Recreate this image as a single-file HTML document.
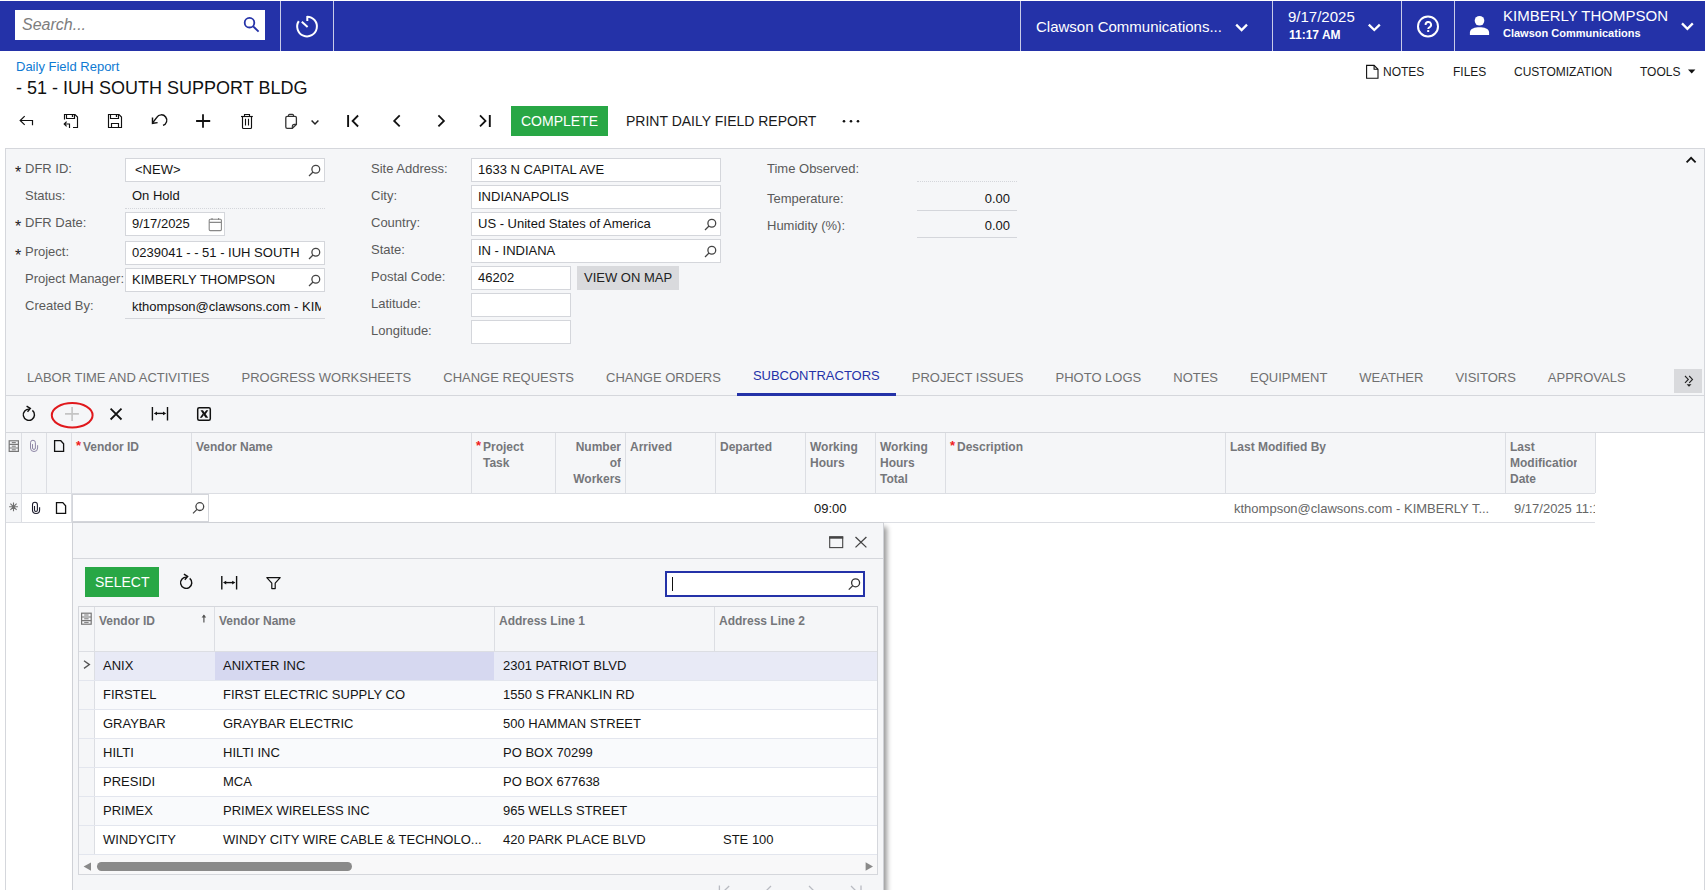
<!DOCTYPE html>
<html><head><meta charset="utf-8">
<style>
*{box-sizing:border-box;margin:0;padding:0}
html,body{width:1705px;height:890px;overflow:hidden;background:#fff}
body{position:relative;font-family:"Liberation Sans",sans-serif;color:#1a1a1a;font-size:13px}
.a{position:absolute}
.t{position:absolute;white-space:nowrap;line-height:1}
svg{position:absolute;overflow:visible}
/* header */
#hdr{left:0;top:1px;width:1705px;height:50px;background:#2432a8}
.sep{position:absolute;top:1px;width:1px;height:50px;background:#c8cbe8}
.wt{color:#fff}
/* form */
.lbl{color:#5a5a5a;font-size:13px}
.inp{position:absolute;height:24px;background:#fff;border:1px solid #d4d6db}
.val{color:#141414;font-size:13px}
.gh{color:#75777b;font-weight:bold;font-size:12px;line-height:16px}
.tab{color:#707070;font-size:13px;line-height:1;height:34px}
.cell{color:#141414;font-size:13px}
</style></head>
<body>
<!-- HEADER -->
<div class="a" id="hdr"></div>
<div class="a" style="left:15px;top:10px;width:250px;height:30px;background:#fff"></div>
<div class="t" style="left:22px;top:17px;font-size:16px;font-style:italic;color:#7d7d7d">Search...</div>
<div class="sep" style="left:280px"></div>
<div class="sep" style="left:333px"></div>
<div class="sep" style="left:1020px"></div>
<div class="sep" style="left:1272px"></div>
<div class="sep" style="left:1401px"></div>
<div class="sep" style="left:1454px"></div>
<div class="t wt" style="left:1036px;top:19px;font-size:15px">Clawson Communications...</div>
<div class="t wt" style="left:1288px;top:9px;font-size:15px">9/17/2025</div>
<div class="t wt" style="left:1289px;top:29px;font-size:12px;font-weight:bold">11:17 AM</div>
<div class="t wt" style="left:1503px;top:8px;font-size:15px">KIMBERLY THOMPSON</div>
<div class="t wt" style="left:1503px;top:28px;font-size:11px;font-weight:bold">Clawson Communications</div>

<!-- TITLE -->
<div class="t" style="left:16px;top:60px;font-size:13px;color:#0e7ad3">Daily Field Report</div>
<div class="t" style="left:16px;top:79px;font-size:18px;color:#111">- 51 - IUH SOUTH SUPPORT BLDG</div>
<div class="t" style="left:1383px;top:66px;font-size:12px;color:#1a1a1a">NOTES</div>
<div class="t" style="left:1453px;top:66px;font-size:12px;color:#1a1a1a">FILES</div>
<div class="t" style="left:1514px;top:66px;font-size:12px;color:#1a1a1a">CUSTOMIZATION</div>
<div class="t" style="left:1640px;top:66px;font-size:12px;color:#1a1a1a">TOOLS</div>

<!-- TOOLBAR -->
<div class="a" style="left:511px;top:106px;width:97px;height:30px;background:#28a745"></div>
<div class="t" style="left:521px;top:114px;font-size:14px;color:#fff">COMPLETE</div>
<div class="t" style="left:626px;top:114px;font-size:14px;color:#1a1a1a">PRINT DAILY FIELD REPORT</div>

<!-- FORM PANEL -->
<div class="a" style="left:5px;top:148px;width:1700px;height:250px;background:#f5f6f8;border:1px solid #d5d7dc;border-bottom:none"></div>


<!-- FORM COL 1 -->
<div class="t lbl" style="left:15px;top:165px;font-size:16px;color:#222">*</div>
<div class="t lbl" style="left:25px;top:162px">DFR ID:</div>
<div class="inp" style="left:125px;top:158px;width:200px"></div>
<div class="t val" style="left:135px;top:163px">&lt;NEW&gt;</div>
<div class="t lbl" style="left:25px;top:189px">Status:</div>
<div class="t val" style="left:132px;top:189px">On Hold</div>
<div class="a" style="left:125px;top:208px;width:200px;height:1px;border-top:1px dotted #d4d6db"></div>
<div class="t lbl" style="left:15px;top:219px;font-size:16px;color:#222">*</div>
<div class="t lbl" style="left:25px;top:216px">DFR Date:</div>
<div class="inp" style="left:125px;top:212px;width:100px"></div>
<div class="t val" style="left:132px;top:217px">9/17/2025</div>
<div class="t lbl" style="left:15px;top:248px;font-size:16px;color:#222">*</div>
<div class="t lbl" style="left:25px;top:245px">Project:</div>
<div class="inp" style="left:125px;top:241px;width:200px"></div>
<div class="t val" style="left:132px;top:246px">0239041 - - 51 - IUH SOUTH</div>
<div class="t lbl" style="left:25px;top:272px">Project Manager:</div>
<div class="inp" style="left:125px;top:268px;width:200px"></div>
<div class="t val" style="left:132px;top:273px">KIMBERLY THOMPSON</div>
<div class="t lbl" style="left:25px;top:299px">Created By:</div>
<div class="a" style="left:125px;top:296px;width:196px;height:22px;overflow:hidden"><div class="t val" style="left:7px;top:4px">kthompson@clawsons.com - KIMBERLY THOMPSON</div></div>
<div class="a" style="left:125px;top:318px;width:200px;height:1px;background:#d4d6db"></div>

<!-- FORM COL 2 -->
<div class="t lbl" style="left:371px;top:162px">Site Address:</div>
<div class="inp" style="left:471px;top:158px;width:250px"></div>
<div class="t val" style="left:478px;top:163px">1633 N CAPITAL AVE</div>
<div class="t lbl" style="left:371px;top:189px">City:</div>
<div class="inp" style="left:471px;top:185px;width:250px"></div>
<div class="t val" style="left:478px;top:190px">INDIANAPOLIS</div>
<div class="t lbl" style="left:371px;top:216px">Country:</div>
<div class="inp" style="left:471px;top:212px;width:250px"></div>
<div class="t val" style="left:478px;top:217px">US - United States of America</div>
<div class="t lbl" style="left:371px;top:243px">State:</div>
<div class="inp" style="left:471px;top:239px;width:250px"></div>
<div class="t val" style="left:478px;top:244px">IN - INDIANA</div>
<div class="t lbl" style="left:371px;top:270px">Postal Code:</div>
<div class="inp" style="left:471px;top:266px;width:100px"></div>
<div class="t val" style="left:478px;top:271px">46202</div>
<div class="a" style="left:577px;top:266px;width:102px;height:24px;background:#d9dadd"></div>
<div class="t" style="left:584px;top:271px;font-size:13px;color:#222">VIEW ON MAP</div>
<div class="t lbl" style="left:371px;top:297px">Latitude:</div>
<div class="inp" style="left:471px;top:293px;width:100px"></div>
<div class="t lbl" style="left:371px;top:324px">Longitude:</div>
<div class="inp" style="left:471px;top:320px;width:100px"></div>

<!-- FORM COL 3 -->
<div class="t lbl" style="left:767px;top:162px">Time Observed:</div>
<div class="a" style="left:917px;top:181px;width:100px;height:1px;border-top:1px dotted #d4d6db"></div>
<div class="t lbl" style="left:767px;top:192px">Temperature:</div>
<div class="t val" style="left:917px;top:192px;width:93px;text-align:right">0.00</div>
<div class="a" style="left:917px;top:210px;width:100px;height:1px;background:#d4d6db"></div>
<div class="t lbl" style="left:767px;top:219px">Humidity (%):</div>
<div class="t val" style="left:917px;top:219px;width:93px;text-align:right">0.00</div>
<div class="a" style="left:917px;top:237px;width:100px;height:1px;background:#d4d6db"></div>

<!-- TABS -->
<div class="a" style="left:5px;top:395px;width:1700px;height:1px;background:#d5d7dc"></div>
<div class="a" style="left:11px;top:361px;height:34px;display:flex" id="tabs">
<div class="tab" style="padding:0 16px;padding-top:10px">LABOR TIME AND ACTIVITIES</div>
<div class="tab" style="padding:0 16px;padding-top:10px">PROGRESS WORKSHEETS</div>
<div class="tab" style="padding:0 16px;padding-top:10px">CHANGE REQUESTS</div>
<div class="tab" style="padding:0 16px;padding-top:10px">CHANGE ORDERS</div>
<div class="tab" style="padding:0 16px;padding-top:8px;height:35px;color:#2432a8;border-bottom:3px solid #2432a8">SUBCONTRACTORS</div>
<div class="tab" style="padding:0 16px;padding-top:10px">PROJECT ISSUES</div>
<div class="tab" style="padding:0 16px;padding-top:10px">PHOTO LOGS</div>
<div class="tab" style="padding:0 16px;padding-top:10px">NOTES</div>
<div class="tab" style="padding:0 16px;padding-top:10px">EQUIPMENT</div>
<div class="tab" style="padding:0 16px;padding-top:10px">WEATHER</div>
<div class="tab" style="padding:0 16px;padding-top:10px">VISITORS</div>
<div class="tab" style="padding:0 16px;padding-top:10px">APPROVALS</div>
</div>
<div class="a" style="left:1674px;top:369px;width:28px;height:24px;background:#d9dadd"></div>


<!-- GRID TOOLBAR -->
<div class="a" style="left:5px;top:396px;width:1700px;height:494px;background:#fff;border-left:1px solid #d5d7dc;border-right:1px solid #d5d7dc"></div>
<div class="a" style="left:6px;top:396px;width:1698px;height:36px;background:#f5f6f8"></div>
<div class="a" style="left:5px;top:432px;width:1700px;height:1px;background:#d5d7dc"></div>
<!-- GRID HEADER -->
<div class="a" style="left:6px;top:433px;width:1589px;height:60px;background:#f5f6f8"></div>
<div class="a" style="left:6px;top:493px;width:1589px;height:1px;background:#dcdee3"></div>
<div class="a" style="left:6px;top:522px;width:1589px;height:1px;background:#dcdee3"></div>

<div class="a" style="left:1595px;top:433px;width:1px;height:60px;background:#dcdee3"></div>
<div class="a" style="left:21px;top:433px;width:1px;height:60px;background:#dcdee3"></div>
<div class="a" style="left:46px;top:433px;width:1px;height:60px;background:#dcdee3"></div>
<div class="a" style="left:71px;top:433px;width:1px;height:60px;background:#dcdee3"></div>
<div class="a" style="left:191px;top:433px;width:1px;height:60px;background:#dcdee3"></div>
<div class="a" style="left:471px;top:433px;width:1px;height:60px;background:#dcdee3"></div>
<div class="a" style="left:555px;top:433px;width:1px;height:60px;background:#dcdee3"></div>
<div class="a" style="left:625px;top:433px;width:1px;height:60px;background:#dcdee3"></div>
<div class="a" style="left:715px;top:433px;width:1px;height:60px;background:#dcdee3"></div>
<div class="a" style="left:805px;top:433px;width:1px;height:60px;background:#dcdee3"></div>
<div class="a" style="left:875px;top:433px;width:1px;height:60px;background:#dcdee3"></div>
<div class="a" style="left:945px;top:433px;width:1px;height:60px;background:#dcdee3"></div>
<div class="a" style="left:1225px;top:433px;width:1px;height:60px;background:#dcdee3"></div>
<div class="a" style="left:1505px;top:433px;width:1px;height:60px;background:#dcdee3"></div>
<div class="a" style="left:21px;top:494px;width:1px;height:28px;background:#dcdee3"></div>
<div class="a" style="left:71px;top:494px;width:1px;height:28px;background:#dcdee3"></div>

<div class="t" style="left:76px;top:439px;font-size:13px;color:#f01c1c;font-weight:bold">*</div>
<div class="t gh" style="left:83px;top:439px">Vendor ID</div>
<div class="t gh" style="left:196px;top:439px">Vendor Name</div>
<div class="t" style="left:476px;top:439px;font-size:13px;color:#f01c1c;font-weight:bold">*</div>
<div class="t gh" style="left:483px;top:439px">Project<br>Task</div>
<div class="a" style="left:556px;top:439px;width:65px;height:50px;overflow:hidden"><div class="gh" style="text-align:right;white-space:nowrap">Number<br>of<br>Workers</div></div>
<div class="t gh" style="left:630px;top:439px">Arrived</div>
<div class="t gh" style="left:720px;top:439px">Departed</div>
<div class="t gh" style="left:810px;top:439px">Working<br>Hours</div>
<div class="t gh" style="left:880px;top:439px">Working<br>Hours<br>Total</div>
<div class="t" style="left:950px;top:439px;font-size:13px;color:#f01c1c;font-weight:bold">*</div>
<div class="t gh" style="left:957px;top:439px">Description</div>
<div class="t gh" style="left:1230px;top:439px">Last Modified By</div>
<div class="a" style="left:1510px;top:439px;width:67px;height:50px;overflow:hidden"><div class="gh" style="white-space:nowrap">Last<br>Modification<br>Date</div></div>
<!-- new row -->
<div class="a" style="left:6px;top:494px;width:15px;height:28px;background:#f5f6f8"></div>
<div class="a" style="left:72px;top:494px;width:137px;height:28px;background:#fff;border:1px solid #d4d6db"></div>
<div class="t cell" style="left:814px;top:502px">09:00</div>
<div class="t cell" style="left:1234px;top:502px;color:#666">kthompson@clawsons.com - KIMBERLY T...</div>
<div class="a" style="left:1514px;top:494px;width:81px;height:28px;overflow:hidden"><div class="t cell" style="left:0;top:8px;color:#666">9/17/2025 11:17 AM</div></div>


<!-- PAGE ICONS -->
<svg width="1705" height="890" style="left:0;top:0" fill="none" stroke-linecap="butt">
 <!-- header search -->
 <circle cx="249.5" cy="22.7" r="4.8" stroke="#2432a8" stroke-width="1.8"/>
 <path d="M253.2 26.4 L258.6 31.6" stroke="#2432a8" stroke-width="1.9"/>
 <!-- timer -->
 <path d="M307 16.65 A9.85 9.85 0 1 1 298.8 21.1" stroke="#fff" stroke-width="2"/>
 <path d="M307.3 16 L307.3 21" stroke="#fff" stroke-width="2"/>
 <path d="M301.8 21.8 L307.6 27.1" stroke="#fff" stroke-width="2"/>
 <!-- chevrons -->
 <path d="M1236.2 24.6 L1241.6 30 L1247 24.6" stroke="#fff" stroke-width="2.3"/>
 <path d="M1368.8 24.6 L1374.3 30 L1379.8 24.6" stroke="#fff" stroke-width="2.3"/>
 <path d="M1682 23.4 L1687.4 28.8 L1692.8 23.4" stroke="#fff" stroke-width="2.3"/>
 <!-- help -->
 <circle cx="1428" cy="26.45" r="10" stroke="#fff" stroke-width="2"/>
 <path d="M1425.6 25 A2.75 2.75 0 1 1 1429.7 27.1 Q1428.2 27.9 1428.2 28.9" stroke="#fff" stroke-width="1.9"/>
 <rect x="1427.2" y="30.1" width="2" height="1.9" fill="#fff"/>
 <!-- person -->
 <circle cx="1479.5" cy="20.75" r="4.8" fill="#fff"/>
 <path d="M1469.9 35 L1469.9 32.5 C1469.9 28.5 1475 27.2 1479.5 27.2 C1484 27.2 1489.1 28.5 1489.1 32.5 L1489.1 35 Z" fill="#fff"/>
 <!-- notes page icon -->
 <path d="M1366.6 65.4 L1374.1 65.4 L1378 69.3 L1378 78.3 L1366.6 78.3 Z" stroke="#111" stroke-width="1.1"/>
 <path d="M1374.1 65.4 L1374.1 69.3 L1378 69.3" stroke="#111" stroke-width="1.1"/>
 <!-- tools caret -->
 <path d="M1688 69.6 L1695.4 69.6 L1691.7 73.4 Z" fill="#111"/>
  <!-- back arrow -->
 <path d="M24.7 116.1 L20.2 120.5 L24.7 124.9 M19.6 120.5 L32.5 120.5 L32.5 125.2" stroke="#111" stroke-width="1.2"/>
 <!-- save & close -->
 <path d="M64.5 119.5 L64.5 114.5 L75 114.5 L77.5 117 L77.5 127.5 L73 127.5" stroke="#111" stroke-width="1.15"/>
 <path d="M66.5 114.5 L66.5 118.5 L74.5 118.5 L74.5 114.5" stroke="#111" stroke-width="1.15"/>
 <path d="M72.5 115 L72.5 117" stroke="#111" stroke-width="1.3"/>
 <path d="M66.6 121.6 L64.2 124 L66.6 126.4 M63.8 124 L69.5 124 L69.5 128" stroke="#111" stroke-width="1.15"/>
 <!-- save -->
 <path d="M108.5 114.5 L119 114.5 L121.5 117 L121.5 127.5 L108.5 127.5 Z" stroke="#111" stroke-width="1.15"/>
 <path d="M110.5 114.5 L110.5 118.5 L118.5 118.5 L118.5 114.5" stroke="#111" stroke-width="1.15"/>
 <path d="M116.5 115 L116.5 117" stroke="#111" stroke-width="1.3"/>
 <path d="M111.5 127.5 L111.5 123.5 L118.5 123.5 L118.5 127.5" stroke="#111" stroke-width="1.15"/>
 <!-- undo -->
 <path d="M163 125.4 A5.4 5.4 0 1 0 156.8 117.4 L152.8 122.6" stroke="#111" stroke-width="1.45"/>
 <path d="M152.5 117.6 L152.5 123.3 L157.6 122.6" stroke="#111" stroke-width="1.45"/>
 <!-- plus -->
 <path d="M203 114.2 L203 127.8 M196.1 121 L210.2 121" stroke="#111" stroke-width="1.8"/>
 <!-- trash -->
 <path d="M241 116.5 L252.8 116.5" stroke="#111" stroke-width="1.15"/>
 <path d="M244.5 116.5 L244.5 114.5 L249.5 114.5 L249.5 116.5" stroke="#111" stroke-width="1.1"/>
 <path d="M242.5 116.5 L242.5 127.5 Q242.5 128.5 243.5 128.5 L250.5 128.5 Q251.5 128.5 251.5 127.5 L251.5 116.5" stroke="#111" stroke-width="1.15"/>
 <path d="M245.5 118.7 L245.5 125.6 M248.5 118.7 L248.5 125.6" stroke="#111" stroke-width="1.1"/>
 <!-- clipboard -->
 <path d="M296.4 124.4 L296.4 117.8 Q296.4 116.4 295 116.4 L287.2 116.4 Q285.8 116.4 285.8 117.8 L285.8 127 Q285.8 128.3 287.2 128.3 L292.3 128.3 Z" stroke="#333" stroke-width="1.3"/>
 <path d="M292.3 128.3 L292.3 126.5 Q292.3 124.4 294.4 124.4 L296.4 124.4" stroke="#333" stroke-width="1.1"/>
 <path d="M288.5 116.4 L288.5 115.4 Q288.5 114.4 289.5 114.4 L292.5 114.4 Q293.5 114.4 293.5 115.4 L293.5 116.4" stroke="#333" stroke-width="1.2"/>
 <path d="M311.6 120.5 L315 124 L318.4 120.5" stroke="#222" stroke-width="1.5"/>
 <!-- nav -->
 <path d="M348.1 115 L348.1 127" stroke="#111" stroke-width="1.9"/>
 <path d="M358.1 115.5 L352.6 121 L358.1 126.5" stroke="#111" stroke-width="1.8"/>
 <path d="M399.7 115.4 L394.2 120.9 L399.7 126.4" stroke="#111" stroke-width="1.8"/>
 <path d="M438.4 115.4 L443.9 120.9 L438.4 126.4" stroke="#111" stroke-width="1.8"/>
 <path d="M480 115.4 L485.5 120.9 L480 126.4" stroke="#111" stroke-width="1.8"/>
 <path d="M489.8 115 L489.8 127" stroke="#111" stroke-width="1.9"/>
 <!-- more dots -->
 <circle cx="844" cy="121.3" r="1.3" fill="#111"/>
 <circle cx="851" cy="121.3" r="1.3" fill="#111"/>
 <circle cx="858" cy="121.3" r="1.3" fill="#111"/>
 <!-- collapse chevron -->
 <path d="M1686.6 162.3 L1691.1 157.8 L1695.6 162.3" stroke="#111" stroke-width="1.8"/>
 <!-- input search icons -->
 <g stroke="#444" stroke-width="1.3">
  <circle cx="315.8" cy="169.2" r="3.9"/><path d="M313 172 L309 176"/>
  <circle cx="315.8" cy="252.2" r="3.9"/><path d="M313 255 L309 259"/>
  <circle cx="315.8" cy="279.2" r="3.9"/><path d="M313 282 L309 286"/>
  <circle cx="711.8" cy="223.2" r="3.9"/><path d="M709 226 L705 230"/>
  <circle cx="711.8" cy="250.2" r="3.9"/><path d="M709 253 L705 257"/>
  <circle cx="199.8" cy="506.6" r="3.9"/><path d="M197 509.4 L193 513.4"/>
 </g>
 <!-- calendar -->
 <rect x="209.2" y="219.2" width="12.2" height="11.4" rx="1" stroke="#888" stroke-width="1.1"/>
 <path d="M209.2 222.4 L221.4 222.4 M212 218 L212 220 M218.6 218 L218.6 220" stroke="#888" stroke-width="1.1"/>
 <!-- tabs more -->
 <path d="M1685 376 L1688.3 379.4 L1685 382.8 M1689.2 376 L1692.5 379.4 L1689.2 382.8" stroke="#222" stroke-width="1.1"/>
 <path d="M1686.6 384.2 L1691.5 384.2 L1689 386.8 Z" fill="#222"/>
 <!-- grid toolbar -->
 <g id="rf"><path d="M32.4 410.4 A5.6 5.6 0 1 1 29.6 409.2" stroke="#111" stroke-width="1.45"/>
 <path d="M26.6 406.2 L30.3 408.5 L27.5 411.7" stroke="#111" stroke-width="1.45" stroke-linejoin="miter"/></g>
 <ellipse cx="72.2" cy="415.3" rx="20.4" ry="12.2" stroke="#e0181c" stroke-width="2"/>
 <path d="M72.1 407 L72.1 421 M65 413.9 L78.9 413.9" stroke="#c4c4c4" stroke-width="1.6"/>
 <path d="M110.6 408.6 L121.5 419.5 M121.5 408.6 L110.6 419.5" stroke="#111" stroke-width="1.8"/>
 <path d="M152.4 407 L152.4 420.6 M167.5 407 L167.5 420.6" stroke="#111" stroke-width="1.4"/>
 <path d="M156 413.4 L164.4 413.4" stroke="#111" stroke-width="1.4"/>
 <path d="M153.8 413.4 L157 411.6 L157 415.2 Z M166.2 413.4 L163 411.6 L163 415.2 Z" fill="#111"/>
 <rect x="197.7" y="407.7" width="12.6" height="12.6" rx="1.5" stroke="#111" stroke-width="1.5"/>
 <path d="M200.5 410.2 L203 410.2 L208.2 417.8 L205.6 417.8 Z" fill="#111"/>
 <path d="M208.3 410.2 L206.2 410.2 L204.2 412.8 L205.6 414.2 Z M199.8 417.8 L201.8 417.8 L204 415 L202.8 413.6 Z" fill="#111"/>
 <!-- grid header icons -->
 <g stroke="#777" stroke-width="1.2">
  <rect x="9.2" y="440.8" width="9.2" height="10.6"/>
  <path d="M9.2 444.4 L18.4 444.4 M9.2 448 L18.4 448"/>
  <path d="M11.8 442.6 L15.8 442.6 M11.8 446.2 L15.8 446.2 M11.8 449.8 L15.8 449.8" stroke-width="1"/>
 </g>
 <path d="M32.5 444.1 L32.5 448 A1.45 1.45 0 0 0 35.4 448 L35.4 442.7 A2.45 2.45 0 0 0 30.5 442.7 L30.5 448 A3.55 3.55 0 0 0 37.6 448 L37.6 445.2" stroke="#8e86a6" stroke-width="1"/>
 <path d="M54.6 440.7 L60.8 440.7 L63.6 443.8 L63.6 451.3 L54.6 451.3 Z" stroke="#111" stroke-width="1.3"/>
 <!-- row icons -->
 <path d="M13.5 502.4 L13.5 511.2 M9.1 506.8 L17.9 506.8 M10.4 503.7 L16.6 509.9 M16.6 503.7 L10.4 509.9" stroke="#707070" stroke-width="1.1"/>
 <path d="M34.5 506.1 L34.5 510 A1.45 1.45 0 0 0 37.4 510 L37.4 504.7 A2.45 2.45 0 0 0 32.5 504.7 L32.5 510 A3.55 3.55 0 0 0 39.6 510 L39.6 507.2" stroke="#1a1a2a" stroke-width="1.1"/>
 <path d="M56.5 502.6 L62.8 502.6 L65.6 505.7 L65.6 513.3 L56.5 513.3 Z" stroke="#111" stroke-width="1.3"/>
</svg>

<!-- MODAL -->
<div class="a" style="left:72px;top:522px;width:812px;height:400px;background:#f5f6f8;border:1px solid #cfd1d6;box-shadow:4px 4px 5px -1px rgba(0,0,0,.4)"></div>
<div class="a" style="left:73px;top:558px;width:810px;height:1px;background:#d5d7dc"></div>
<div class="a" style="left:85px;top:567px;width:74px;height:30px;background:#28a745"></div>
<div class="t" style="left:95px;top:575px;font-size:14px;color:#fff">SELECT</div>
<div class="a" style="left:665px;top:571px;width:200px;height:26px;background:#fff;border:2px solid #2432a8"></div>
<div class="a" style="left:672px;top:577px;width:1px;height:14px;background:#111"></div>
<!-- modal grid -->
<div class="a" style="left:78px;top:606px;width:800px;height:269px;background:#fff;border:1px solid #d5d7dc"></div>
<div class="a" style="left:79px;top:607px;width:798px;height:44px;background:#f5f6f8"></div>
<div class="a" style="left:79px;top:651px;width:798px;height:1px;background:#dcdee3"></div>
<div class="a" style="left:94px;top:607px;width:1px;height:44px;background:#dcdee3"></div>
<div class="a" style="left:214px;top:607px;width:1px;height:44px;background:#dcdee3"></div>
<div class="a" style="left:494px;top:607px;width:1px;height:44px;background:#dcdee3"></div>
<div class="a" style="left:714px;top:607px;width:1px;height:44px;background:#dcdee3"></div>

<div class="t gh" style="left:99px;top:613px">Vendor ID</div>
<div class="t gh" style="left:219px;top:613px">Vendor Name</div>
<div class="t gh" style="left:499px;top:613px">Address Line 1</div>
<div class="t gh" style="left:719px;top:613px">Address Line 2</div>
<div class="a" style="left:79px;top:652px;width:15px;height:202px;background:#f5f6f8"></div>
<div class="a" style="left:95px;top:652px;width:782px;height:28px;background:#e8eaf6"></div>
<div class="a" style="left:215px;top:652px;width:279px;height:28px;background:#d6d8f0"></div>
<div class="a" style="left:79px;top:680px;width:798px;height:1px;background:#e3e6ee"></div>
<div class="a" style="left:94px;top:652px;width:1px;height:28px;background:#dcdee3"></div>
<div class="t cell" style="left:103px;top:659px">ANIX</div>
<div class="t cell" style="left:223px;top:659px">ANIXTER INC</div>
<div class="t cell" style="left:503px;top:659px">2301 PATRIOT BLVD</div>
<div class="a" style="left:95px;top:681px;width:782px;height:28px;background:#f9fafc"></div>
<div class="a" style="left:79px;top:709px;width:798px;height:1px;background:#e3e6ee"></div>
<div class="a" style="left:94px;top:681px;width:1px;height:28px;background:#dcdee3"></div>
<div class="t cell" style="left:103px;top:688px">FIRSTEL</div>
<div class="t cell" style="left:223px;top:688px">FIRST ELECTRIC SUPPLY CO</div>
<div class="t cell" style="left:503px;top:688px">1550 S FRANKLIN RD</div>
<div class="a" style="left:79px;top:738px;width:798px;height:1px;background:#e3e6ee"></div>
<div class="a" style="left:94px;top:710px;width:1px;height:28px;background:#dcdee3"></div>
<div class="t cell" style="left:103px;top:717px">GRAYBAR</div>
<div class="t cell" style="left:223px;top:717px">GRAYBAR ELECTRIC</div>
<div class="t cell" style="left:503px;top:717px">500 HAMMAN STREET</div>
<div class="a" style="left:95px;top:739px;width:782px;height:28px;background:#f9fafc"></div>
<div class="a" style="left:79px;top:767px;width:798px;height:1px;background:#e3e6ee"></div>
<div class="a" style="left:94px;top:739px;width:1px;height:28px;background:#dcdee3"></div>
<div class="t cell" style="left:103px;top:746px">HILTI</div>
<div class="t cell" style="left:223px;top:746px">HILTI INC</div>
<div class="t cell" style="left:503px;top:746px">PO BOX 70299</div>
<div class="a" style="left:79px;top:796px;width:798px;height:1px;background:#e3e6ee"></div>
<div class="a" style="left:94px;top:768px;width:1px;height:28px;background:#dcdee3"></div>
<div class="t cell" style="left:103px;top:775px">PRESIDI</div>
<div class="t cell" style="left:223px;top:775px">MCA</div>
<div class="t cell" style="left:503px;top:775px">PO BOX 677638</div>
<div class="a" style="left:95px;top:797px;width:782px;height:28px;background:#f9fafc"></div>
<div class="a" style="left:79px;top:825px;width:798px;height:1px;background:#e3e6ee"></div>
<div class="a" style="left:94px;top:797px;width:1px;height:28px;background:#dcdee3"></div>
<div class="t cell" style="left:103px;top:804px">PRIMEX</div>
<div class="t cell" style="left:223px;top:804px">PRIMEX WIRELESS INC</div>
<div class="t cell" style="left:503px;top:804px">965 WELLS STREET</div>
<div class="a" style="left:79px;top:854px;width:798px;height:1px;background:#e3e6ee"></div>
<div class="a" style="left:94px;top:826px;width:1px;height:28px;background:#dcdee3"></div>
<div class="t cell" style="left:103px;top:833px">WINDYCITY</div>
<div class="t cell" style="left:223px;top:833px">WINDY CITY WIRE CABLE &amp; TECHNOLO...</div>
<div class="t cell" style="left:503px;top:833px">420 PARK PLACE BLVD</div>
<div class="t cell" style="left:723px;top:833px">STE 100</div>

<div class="a" style="left:79px;top:855px;width:798px;height:19px;background:#f8f8f9"></div>
<div class="a" style="left:97px;top:862px;width:255px;height:9px;border-radius:4.5px;background:#8a8a8a"></div>


<svg width="1705" height="890" style="left:0;top:0" fill="none">
 <!-- maximize/close -->
 <rect x="829.7" y="536.8" width="13" height="10.8" stroke="#444" stroke-width="1.1"/>
 <path d="M829.2 537.6 L843.2 537.6" stroke="#444" stroke-width="2.2"/>
 <path d="M855.5 537 L866.4 547.4 M866.4 537 L855.5 547.4" stroke="#444" stroke-width="1.3"/>
 <!-- refresh -->
 <g transform="translate(157.3 168)"><path d="M32.4 410.4 A5.6 5.6 0 1 1 29.6 409.2" stroke="#111" stroke-width="1.45"/>
 <path d="M26.6 406.2 L30.3 408.5 L27.5 411.7" stroke="#111" stroke-width="1.45" stroke-linejoin="miter"/></g>
 <!-- fit -->
 <path d="M221.8 576 L221.8 589.6 M236.6 576 L236.6 589.6" stroke="#111" stroke-width="1.4"/>
 <path d="M225.2 582.6 L233.2 582.6" stroke="#111" stroke-width="1.4"/>
 <path d="M223 582.6 L226.2 580.8 L226.2 584.4 Z M235.4 582.6 L232.2 580.8 L232.2 584.4 Z" fill="#111"/>
 <!-- filter -->
 <path d="M266.8 577.6 L280.2 577.6 L275.2 583.2 L275.2 588.6 L271.8 588.6 L271.8 583.2 Z" stroke="#111" stroke-width="1.2" stroke-linejoin="round"/>
 <!-- modal search -->
 <circle cx="855.6" cy="582.8" r="4" stroke="#333" stroke-width="1.3"/>
 <path d="M852.8 585.6 L848.8 589.6" stroke="#333" stroke-width="1.3"/>
 <!-- modal grid header icon -->
 <g stroke="#777" stroke-width="1.2">
  <rect x="81.6" y="613.2" width="9.6" height="11"/>
  <path d="M81.6 617 L91.2 617 M81.6 620.6 L91.2 620.6"/>
  <path d="M84.2 615 L88.6 615 M84.2 618.8 L88.6 618.8 M84.2 622.4 L88.6 622.4" stroke-width="1"/>
 </g>
 <!-- sort arrow -->
 <path d="M203.9 615.2 L203.9 622.6" stroke="#555" stroke-width="1.2"/>
 <path d="M201.6 617.6 L203.9 614.6 L206.2 617.6 Z" fill="#555"/>
 <!-- row chevron -->
 <path d="M84 660.8 L89.4 664.6 L84 668.4" stroke="#555" stroke-width="1.3"/>
 <!-- scroll arrows -->
 <path d="M91 862.4 L91 870.8 L83.6 866.6 Z" fill="#8a8a8a"/>
 <path d="M865.6 862.2 L865.6 870.8 L873 866.5 Z" fill="#8a8a8a"/>
 <!-- pager -->
 <g stroke="#b9bbc2" stroke-width="1.3">
  <path d="M719.4 885.5 L719.4 895 M729.2 886 L724 891 L729.2 896"/>
  <path d="M771 886 L766 891 L771 896"/>
  <path d="M809 886 L814 891 L809 896"/>
  <path d="M851 886 L856 891 L851 896 M861 885.5 L861 895"/>
 </g>
</svg>

</body></html>
